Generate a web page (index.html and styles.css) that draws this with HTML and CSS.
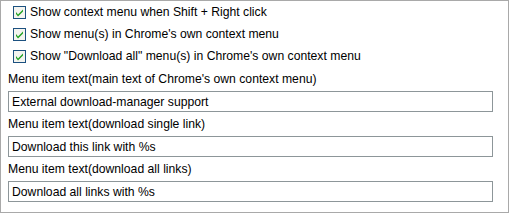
FILE: index.html
```html
<!DOCTYPE html>
<html lang="en">
<head>
  <meta charset="UTF-8">
  <title>Options</title>
  <link rel="stylesheet" href="styles.css">
</head>
<body>
  <div class="panel">
    <label class="check-row">
      <svg class="check-box" width="13" height="13" viewBox="0 0 13 13"><rect x="0.5" y="0.5" width="12" height="12" fill="#f4f4f0" stroke="#1c5180"/><path d="M3 6 L5 8.5 L10 3.5 L10 5.5 L5 10.5 L3 8 Z" fill="#21a121"/></svg>
      Show context menu when Shift + Right click
    </label>
    <label class="check-row">
      <svg class="check-box" width="13" height="13" viewBox="0 0 13 13"><rect x="0.5" y="0.5" width="12" height="12" fill="#f4f4f0" stroke="#1c5180"/><path d="M3 6 L5 8.5 L10 3.5 L10 5.5 L5 10.5 L3 8 Z" fill="#21a121"/></svg>
      Show menu(s) in Chrome's own context menu
    </label>
    <label class="check-row">
      <svg class="check-box" width="13" height="13" viewBox="0 0 13 13"><rect x="0.5" y="0.5" width="12" height="12" fill="#f4f4f0" stroke="#1c5180"/><path d="M3 6 L5 8.5 L10 3.5 L10 5.5 L5 10.5 L3 8 Z" fill="#21a121"/></svg>
      Show "Download all" menu(s) in Chrome's own context menu
    </label>

    <div class="field-label">Menu item text(main text of Chrome's own context menu)</div>
    <input type="text" class="field" value="External download-manager support">
    <div class="field-label">Menu item text(download single link)</div>
    <input type="text" class="field" value="Download this link with %s">
    <div class="field-label">Menu item text(download all links)</div>
    <input type="text" class="field" value="Download all links with %s">
  </div>
</body>
</html>
```

FILE: styles.css
```css
body {
  margin: 0;
  background-color: white;
  font-family: "Liberation Sans", Arial, sans-serif;
  font-size: 12.2px;
  color: black;
}
.panel {
  width: 509px;
  height: 213px;
  box-sizing: border-box;
  border: 1px solid #a9a9a9;
  padding: 0 15px 0 7px;
  display: flex;
  flex-direction: column;
}
.check-row {
  height: 22px;
  display: flex;
  align-items: center;
  padding-left: 5px;
  gap: 4px;
}
.check-box {
  flex: none;
}
.field-label {
  height: 24px;
  line-height: 25px;
}
.field {
  height: 21px;
  width: 485px;
  box-sizing: border-box;
  margin: 0;
  border: 1px solid #8d9699;
  padding: 0 3px;
  font-family: "Liberation Sans", Arial, sans-serif;
  font-size: 12.2px;
  color: black;
}
```
